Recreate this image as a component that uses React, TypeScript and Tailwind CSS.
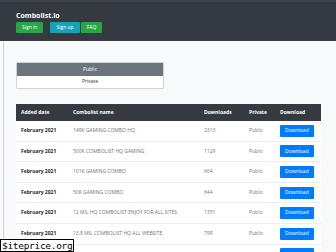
import React from 'react'

const rows = [
  { date: 'February 2021', name: '148K GAMING COMBO HQ', dl: '2313' },
  { date: 'February 2021', name: '500K COMBOLIST HQ GAMING', dl: '1129' },
  { date: 'February 2021', name: '101K GAMING COMBO', dl: '664' },
  { date: 'February 2021', name: '50K GAMING COMBO', dl: '644' },
  { date: 'February 2021', name: '12 MIL HQ COMBOLIST ENJOY FOR ALL SITES', dl: '1351' },
  { date: 'February 2021', name: '13,8 MIL COMBOLIST HQ ALL WEBSITE', dl: '798' },
  { date: 'February 2021', name: '1 MIL COMBOLIST ENJOY', dl: '557' },
]

export default function App() {
  return (
    <div className="relative w-[336px] h-[252px] overflow-hidden bg-[#f8f9fa]" style={{ fontFamily: '"Open Sans", "Liberation Sans", sans-serif' }}>
      {/* Header */}
      <div className="h-[41px] bg-[#343a40] border-t-2 border-[#3e444a] pl-4 pt-[9px]">
        <div className="text-white font-bold text-[7px] leading-[9px]">Combolist.io</div>
        <div className="flex mt-[2px] gap-[1px]">
          <span className="bg-[#28a745] text-white text-[5px] px-[6px] h-[11px] flex items-center rounded-[1px]">Sign in</span>
          <span className="ml-[6px] bg-[#17a2b8] text-white text-[5px] px-[6px] h-[11px] flex items-center rounded-[1px]">Sign up</span>
          <span className="bg-[#28a745] text-white text-[5px] px-[6px] h-[11px] flex items-center rounded-[1px]">FAQ</span>
        </div>
      </div>

      <div className="ml-[3px] border-l border-[#d0d3d6] h-full pl-[12px] pt-[21px]">
        {/* Toggle */}
        <div className="w-[148px] border border-[#ced4da] rounded-[1px] text-[5px]">
          <div className="bg-[#6c757d] text-white text-center h-[13px] flex items-center justify-center">Public</div>
          <div className="bg-white text-[#333] text-center h-[12px] flex items-center justify-center">Private</div>
        </div>

        {/* Table */}
        <div className="mt-[15px] w-[305px] text-[5px]">
          <div className="flex items-center h-[17px] bg-[#343a40] text-white font-bold">
            <div className="w-[57px] pl-[5px]">Added date</div>
            <div className="w-[131px]">Combolist name</div>
            <div className="w-[45px]">Downloads</div>
            <div className="w-[31px]">Private</div>
            <div className="flex-1">Download</div>
          </div>
          {rows.map((r, i) => (
            <div key={i} className="flex items-center h-[20.6px] border-b border-[#eceef0] bg-white">
              <div className="w-[57px] pl-[5px] font-bold text-[#212529]">{r.date}</div>
              <div className="w-[131px] text-[#6c757d] whitespace-nowrap overflow-hidden">{r.name}</div>
              <div className="w-[45px] text-[#6c757d]">{r.dl}</div>
              <div className="w-[31px] text-[#6c757d]">Public</div>
              <div className="flex-1">
                <span className="inline-flex items-center bg-[#007bff] text-white rounded-[1px] h-[12px] px-[5px]">Download</span>
              </div>
            </div>
          ))}
        </div>
      </div>

      {/* watermark */}
      <div className="absolute left-0 bottom-0 w-[74px] h-[13px] bg-white border border-black flex items-center pl-[1px] text-black text-[9.5px] leading-none tracking-[-0.3px] whitespace-nowrap" style={{ fontFamily: '"DejaVu Sans Mono", monospace' }}>
        $iteprice.org
      </div>
    </div>
  )
}
